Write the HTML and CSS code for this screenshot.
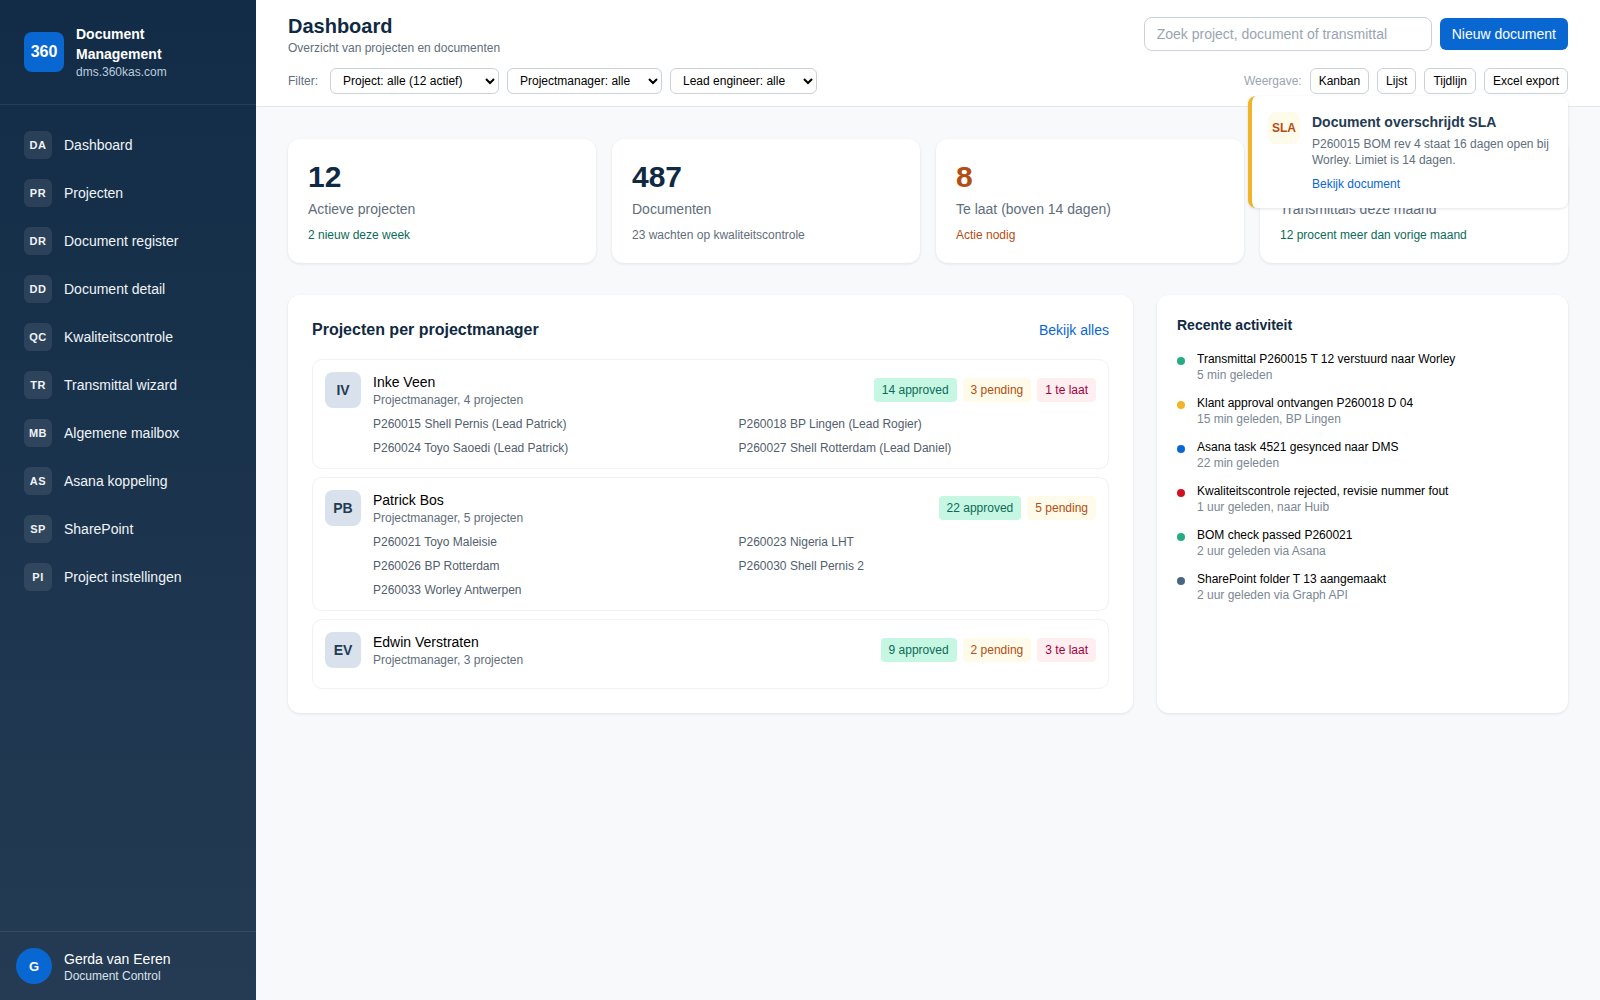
FILE: index.html
```html
<!DOCTYPE html>
<html lang="nl">
<head>
<meta charset="utf-8">
<title>Dashboard</title>
<link rel="stylesheet" href="styles.css">
</head>
<body>
<div class="app">
  <aside class="sidebar">
    <div class="brand">
      <div class="brand-logo">360</div>
      <div>
        <div class="brand-name">Document Management</div>
        <div class="brand-url">dms.360kas.com</div>
      </div>
    </div>
    <nav class="nav">
      <a class="nav-item"><span class="nav-icon">DA</span>Dashboard</a>
      <a class="nav-item"><span class="nav-icon">PR</span>Projecten</a>
      <a class="nav-item"><span class="nav-icon">DR</span>Document register</a>
      <a class="nav-item"><span class="nav-icon">DD</span>Document detail</a>
      <a class="nav-item"><span class="nav-icon">QC</span>Kwaliteitscontrole</a>
      <a class="nav-item"><span class="nav-icon">TR</span>Transmittal wizard</a>
      <a class="nav-item"><span class="nav-icon">MB</span>Algemene mailbox</a>
      <a class="nav-item"><span class="nav-icon">AS</span>Asana koppeling</a>
      <a class="nav-item"><span class="nav-icon">SP</span>SharePoint</a>
      <a class="nav-item"><span class="nav-icon">PI</span>Project instellingen</a>
    </nav>
    <div class="user">
      <div class="user-avatar">G</div>
      <div class="user-info">
        <div class="user-name">Gerda van Eeren</div>
        <div class="user-role">Document Control</div>
      </div>
    </div>
  </aside>
  <main class="main">
    <header class="topbar">
      <div class="topbar-row title-row">
        <div>
          <h1 class="page-title">Dashboard</h1>
          <div class="page-sub">Overzicht van projecten en documenten</div>
        </div>
        <div class="actions">
          <input class="search" type="text" placeholder="Zoek project, document of transmittal">
          <button class="primary">Nieuw document</button>
        </div>
      </div>
      <div class="topbar-row filter-row">
        <div class="filters">
          <span class="filter-label">Filter:</span>
          <select class="select select-project"><option>Project: alle (12 actief)</option></select>
          <select class="select"><option>Projectmanager: alle</option></select>
          <select class="select"><option>Lead engineer: alle</option></select>
        </div>
        <div class="views">
          <span class="view-label">Weergave:</span>
          <button class="view-btn">Kanban</button>
          <button class="view-btn">Lijst</button>
          <button class="view-btn">Tijdlijn</button>
          <button class="view-btn">Excel export</button>
        </div>
      </div>
    </header>
    <div class="toast">
      <div class="toast-icon">SLA</div>
      <div>
        <div class="toast-title">Document overschrijdt SLA</div>
        <div class="toast-text">P260015 BOM rev 4 staat 16 dagen open bij Worley. Limiet is 14 dagen.</div>
        <a class="toast-link">Bekijk document</a>
      </div>
    </div>
    <div class="content">
      <section class="stats">
        <div class="stat"><div class="stat-value">12</div><div class="stat-label">Actieve projecten</div><div class="stat-note good">2 nieuw deze week</div></div>
        <div class="stat"><div class="stat-value">487</div><div class="stat-label">Documenten</div><div class="stat-note">23 wachten op kwaliteitscontrole</div></div>
        <div class="stat"><div class="stat-value warn">8</div><div class="stat-label">Te laat (boven 14 dagen)</div><div class="stat-note warn">Actie nodig</div></div>
        <div class="stat"><div class="stat-value">34</div><div class="stat-label">Transmittals deze maand</div><div class="stat-note good">12 procent meer dan vorige maand</div></div>
      </section>
      <section class="panels">
        <div class="panel panel-projects">
          <div class="panel-head">
            <h2 class="panel-title">Projecten per projectmanager</h2>
            <a class="panel-link">Bekijk alles</a>
          </div>
          <div class="pm-list">
            <article class="pm">
              <div class="pm-avatar">IV</div>
              <div class="pm-body">
                <div class="pm-top">
                  <div>
                    <div class="pm-name">Inke Veen</div>
                    <div class="pm-role">Projectmanager, 4 projecten</div>
                  </div>
                  <div class="pills"><span class="pill ok">14 approved</span><span class="pill pending">3 pending</span><span class="pill late">1 te laat</span></div>
                </div>
                <div class="pm-projects">
                  <div>P260015 Shell Pernis (Lead Patrick)</div>
                  <div>P260018 BP Lingen (Lead Rogier)</div>
                  <div>P260024 Toyo Saoedi (Lead Patrick)</div>
                  <div>P260027 Shell Rotterdam (Lead Daniel)</div>
                </div>
              </div>
            </article>
            <article class="pm">
              <div class="pm-avatar">PB</div>
              <div class="pm-body">
                <div class="pm-top">
                  <div>
                    <div class="pm-name">Patrick Bos</div>
                    <div class="pm-role">Projectmanager, 5 projecten</div>
                  </div>
                  <div class="pills"><span class="pill ok">22 approved</span><span class="pill pending">5 pending</span></div>
                </div>
                <div class="pm-projects">
                  <div>P260021 Toyo Maleisie</div>
                  <div>P260023 Nigeria LHT</div>
                  <div>P260026 BP Rotterdam</div>
                  <div>P260030 Shell Pernis 2</div>
                  <div>P260033 Worley Antwerpen</div>
                </div>
              </div>
            </article>
            <article class="pm">
              <div class="pm-avatar">EV</div>
              <div class="pm-body">
                <div class="pm-top">
                  <div>
                    <div class="pm-name">Edwin Verstraten</div>
                    <div class="pm-role">Projectmanager, 3 projecten</div>
                  </div>
                  <div class="pills"><span class="pill ok">9 approved</span><span class="pill pending">2 pending</span><span class="pill late">3 te laat</span></div>
                </div>
                <div class="pm-projects"></div>
              </div>
            </article>
          </div>
        </div>
        <div class="panel panel-activity">
          <h2 class="activity-title">Recente activiteit</h2>
          <ul class="activity">
            <li class="activity-item"><span class="dot green"></span><div><div class="activity-text">Transmittal P260015 T 12 verstuurd naar Worley</div><div class="activity-time">5 min geleden</div></div></li>
            <li class="activity-item"><span class="dot amber"></span><div><div class="activity-text">Klant approval ontvangen P260018 D 04</div><div class="activity-time">15 min geleden, BP Lingen</div></div></li>
            <li class="activity-item"><span class="dot blue"></span><div><div class="activity-text">Asana task 4521 gesynced naar DMS</div><div class="activity-time">22 min geleden</div></div></li>
            <li class="activity-item"><span class="dot red"></span><div><div class="activity-text">Kwaliteitscontrole rejected, revisie nummer fout</div><div class="activity-time">1 uur geleden, naar Huib</div></div></li>
            <li class="activity-item"><span class="dot green"></span><div><div class="activity-text">BOM check passed P260021</div><div class="activity-time">2 uur geleden via Asana</div></div></li>
            <li class="activity-item"><span class="dot slate"></span><div><div class="activity-text">SharePoint folder T 13 aangemaakt</div><div class="activity-time">2 uur geleden via Graph API</div></div></li>
          </ul>
        </div>
      </section>
    </div>
  </main>
</div>
</body>
</html>
```

FILE: styles.css
```css
* { box-sizing: border-box; }
html, body { margin: 0; height: 100%; }
body { font-family: "Liberation Sans", Arial, sans-serif; font-size: 14px; color: #102a43; background: #f7f9fb; overflow: hidden; }
.app { display: flex; height: 1000px; }

.sidebar { width: 256px; flex: none; display: flex; flex-direction: column; background: linear-gradient(180deg, #122c47 0%, #243b53 100%); color: #fff; }
.brand { display: flex; align-items: center; gap: 12px; padding: 24px; height: 105px; border-bottom: 1px solid rgba(255,255,255,.08); }
.brand-logo { width: 40px; height: 40px; flex: none; border-radius: 8px; background: #0967d2; display: flex; align-items: center; justify-content: center; font-size: 16px; font-weight: 700; }
.brand-name { font-size: 14px; font-weight: 700; line-height: 20px; }
.brand-url { font-size: 12px; line-height: 16px; color: #bcccdc; }
.nav { flex: 1; padding: 16px 0; }
.nav-item { display: flex; align-items: center; gap: 12px; height: 48px; padding: 0 24px; font-size: 14px; color: #f0f4f8; }
.nav-icon { width: 28px; height: 28px; flex: none; border-radius: 6px; background: rgba(255,255,255,.09); display: flex; align-items: center; justify-content: center; font-size: 11px; font-weight: 700; letter-spacing: .5px; }
.user { display: flex; align-items: center; gap: 12px; padding: 16px; height: 69px; border-top: 1px solid rgba(255,255,255,.08); }
.user-avatar { width: 36px; height: 36px; flex: none; border-radius: 50%; background: #0967d2; display: flex; align-items: center; justify-content: center; font-size: 13px; font-weight: 700; }
.user-info { padding-top: 2px; }
.user-name { font-size: 14px; line-height: 18px; }
.user-role { font-size: 12px; line-height: 16px; color: #d9e2ec; }

.main { flex: 1; min-width: 0; position: relative; }
.topbar { height: 107px; padding: 16px 32px 12px; background: #fff; border-bottom: 1px solid #e4e7eb; }
.topbar-row { display: flex; justify-content: space-between; align-items: center; }
.title-row { align-items: flex-start; }
.page-title { margin: 0; font-size: 20px; line-height: 20px; font-weight: 700; color: #102a43; }
.page-sub { margin-top: 4px; font-size: 12px; line-height: 16px; color: #616e7c; }
.actions { display: flex; gap: 8px; align-items: center; margin-top: 1px; }
.search { width: 288px; height: 34px; padding: 0 12px; border: 1px solid #cbd2d9; border-radius: 8px; font: 14px "Liberation Sans", Arial, sans-serif; background: #fff; outline: none; }
.search::placeholder { color: #9aa5b1; }
.primary { height: 32px; padding: 0 12px; border: 0; border-radius: 6px; background: #0967d2; color: #fff; font: 14px "Liberation Sans", Arial, sans-serif; }
.filter-row { margin-top: 12px; }
.filters { display: flex; align-items: center; gap: 8px; }
.filter-label { font-size: 12px; color: #616e7c; margin-right: 4px; }
.select { height: 26px; padding: 0 14px 0 8px; border: 1px solid #cbd2d9; border-radius: 6px; background: #fff; color: #000; font: 12px "Liberation Sans", Arial, sans-serif; }
.select-project { padding-right: 19px; }
.views { display: flex; align-items: center; gap: 8px; }
.view-label { font-size: 12px; color: #9aa5b1; }
.view-btn { height: 26px; padding: 0 8px; border: 1px solid #cbd2d9; border-radius: 6px; background: #fff; color: #000; font: 12px "Liberation Sans", Arial, sans-serif; }

.toast { position: absolute; top: 96px; right: 32px; width: 320px; height: 112px; display: flex; gap: 12px; padding: 16px; background: #fff; border-left: 4px solid #f0b429; border-radius: 8px; box-shadow: 0 1px 3px rgba(16,42,67,.12); }
.toast-icon { width: 32px; height: 32px; flex: none; border-radius: 8px; background: #fffbea; color: #b44d12; display: flex; align-items: center; justify-content: center; font-size: 12px; font-weight: 700; }
.toast-title { font-size: 14px; line-height: 20px; font-weight: 700; color: #243b53; }
.toast-text { margin-top: 4px; font-size: 12px; line-height: 16px; color: #616e7c; }
.toast-link { display: block; margin-top: 8px; font-size: 12px; line-height: 16px; color: #0967d2; }

.content { padding: 32px; }
.stats { display: grid; grid-template-columns: repeat(4, 1fr); gap: 16px; }
.stat { height: 124px; padding: 20px; background: #fff; border-radius: 12px; box-shadow: 0 1px 3px rgba(16,42,67,.1); }
.stat-value { font-size: 30px; line-height: 36px; font-weight: 700; color: #102a43; }
.stat-value.warn { color: #b44d12; }
.stat-label { margin-top: 4px; font-size: 14px; line-height: 20px; color: #616e7c; }
.stat-note { margin-top: 8px; font-size: 12px; line-height: 16px; color: #616e7c; }
.stat-note.good { color: #0c6b58; }
.stat-note.warn { color: #b44d12; }

.panels { display: grid; grid-template-columns: minmax(0, 1fr) 411px; gap: 24px; margin-top: 32px; align-items: stretch; }
.panel { background: #fff; border-radius: 12px; box-shadow: 0 1px 3px rgba(16,42,67,.1); }
.panel-projects { padding: 24px; }
.panel-head { display: flex; justify-content: space-between; align-items: center; margin-bottom: 18px; }
.panel-title { margin: 0; font-size: 16px; line-height: 22px; font-weight: 700; color: #102a43; }
.panel-link { font-size: 14px; color: #0967d2; }
.pm-list { display: flex; flex-direction: column; gap: 8px; }
.pm { display: flex; gap: 12px; padding: 12px; border: 1px solid #f0f2f5; border-radius: 10px; }
.pm-avatar { width: 36px; height: 36px; flex: none; border-radius: 8px; background: #d9e2ec; color: #243b53; display: flex; align-items: center; justify-content: center; font-size: 14px; font-weight: 700; }
.pm-body { flex: 1; min-width: 0; }
.pm-top { display: flex; justify-content: space-between; align-items: center; }
.pm-name { font-size: 14px; line-height: 20px; color: #000; }
.pm-role { font-size: 12px; line-height: 16px; color: #616e7c; }
.pills { display: flex; gap: 6px; }
.pill { padding: 4px 8px; border-radius: 4px; font-size: 12px; line-height: 16px; }
.pill.ok { background: #c6f7e2; color: #0c6b58; }
.pill.pending { background: #fffbea; color: #b44d12; }
.pill.late { background: #ffeeef; color: #a1003f; }
.pm-projects { display: grid; grid-template-columns: repeat(2, 1fr); gap: 8px; margin-top: 8px; font-size: 12px; line-height: 16px; color: #52606d; }

.panel-activity { padding: 20px; }
.activity-title { margin: 0 0 16px; font-size: 14px; line-height: 20px; font-weight: 700; color: #102a43; }
.activity { list-style: none; margin: 0; padding: 0; display: flex; flex-direction: column; gap: 12px; }
.activity-item { display: flex; gap: 12px; }
.dot { width: 8px; height: 8px; flex: none; margin-top: 6px; border-radius: 50%; }
.dot.green { background: #27ab83; }
.dot.amber { background: #f0b429; }
.dot.blue { background: #0967d2; }
.dot.red { background: #cf1124; }
.dot.slate { background: #486581; }
.activity-text { font-size: 12px; line-height: 16px; color: #000; }
.activity-time { font-size: 12px; line-height: 16px; color: #7b8794; }
```
